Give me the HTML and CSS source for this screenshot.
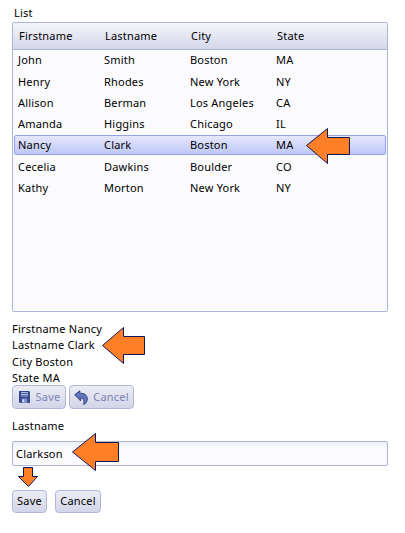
FILE: index.html
```
<!DOCTYPE html>
<html lang="en">
<head>
<meta charset="utf-8">
<title>List</title>
<link rel="stylesheet" href="styles.css">
</head>
<body>
<main class="page">
  <h1 class="title">List</h1>
  <section class="grid">
    <div class="row head"><span>Firstname</span><span>Lastname</span><span>City</span><span>State</span></div>
    <div class="rows">
      <div class="row"><span>John</span><span>Smith</span><span>Boston</span><span>MA</span></div>
      <div class="row"><span>Henry</span><span>Rhodes</span><span>New York</span><span>NY</span></div>
      <div class="row"><span>Allison</span><span>Berman</span><span>Los Angeles</span><span>CA</span></div>
      <div class="row"><span>Amanda</span><span>Higgins</span><span>Chicago</span><span>IL</span></div>
      <div class="row selected"><span>Nancy</span><span>Clark</span><span>Boston</span><span>MA</span></div>
      <div class="row"><span>Cecelia</span><span>Dawkins</span><span>Boulder</span><span>CO</span></div>
      <div class="row"><span>Kathy</span><span>Morton</span><span>New York</span><span>NY</span></div>
    </div>
  </section>
  <section class="details">
    <p>Firstname Nancy</p>
    <p>Lastname Clark</p>
    <p>City Boston</p>
    <p>State MA</p>
  </section>
  <div class="toolbar">
    <button class="btn disabled save-icon"><svg width="11" height="12" viewBox="0 0 12 12" preserveAspectRatio="none"><path fill="#36488f" d="M1 0h10l1 1v11H1l-1-1V0z"/><path fill="#b4bde2" d="M2.5 1h7v4.5h-7z"/><path fill="#4a5ba3" d="M3 2h6v1H3zM3 4h6v.7H3z"/><path fill="#8290c8" d="M3 7.5h6V12H3z"/><path fill="#e0e4f5" d="M4 8.3h1.6V11H4z"/></svg><span>Save</span></button>
    <button class="btn disabled cancel-icon"><svg width="14" height="15" viewBox="0 0 14 15"><path fill="#6274bd" stroke="#34437f" d="M.7 4.8 5.8.8v2.5c4.3-.3 7.5 1.7 7.5 5.6 0 2.6-1.3 4.7-3.7 5.6 1.2-3.6.2-6.1-3.4-6.4l.4 2.8z"/></svg><span>Cancel</span></button>
  </div>
  <label class="label" for="lastname">Lastname</label>
  <input class="field" id="lastname" value="Clarkson">
  <div class="actions"><button class="btn save">Save</button><button class="btn cancel">Cancel</button></div>
  <svg class="arrows" width="405" height="533" viewBox="0 0 405 533">
    <path d="M306.5 145.5 327.5 128.5v9h22v17h-22v9z"/>
    <path d="M102.5 345.5 123.5 327.5v9h21v18h-21v9z"/>
    <path d="M72.5 452 95.5 433.5v9h23v19h-23v9z"/>
    <path d="M23.5 467.5h9v9h5l-9 10-10-10h5z"/>
  </svg>
</main>
</body>
</html>
```
FILE: styles.css
```
* { box-sizing: border-box; }
body { margin: 0; background: #fff; }
.page {
  position: relative;
  width: 405px;
  height: 533px;
  padding: 5px 17px 0 12px;
  overflow: hidden;
  font: 11px/16px "Noto Sans", "Open Sans", sans-serif;
  letter-spacing: .2px;
  color: #000;
}
.title { margin: 0 0 1px 2px; font-size: 11px; font-weight: 400; line-height: 16px; }
.grid {
  height: 290px;
  border: 1px solid #aeb5d6;
  border-radius: 2px;
  background: #fbfbfd;
}
.row {
  display: grid;
  grid-template-columns: 86px 86px 86px 1fr;
  align-items: center;
  height: 21px;
  padding-left: 3px;
  border: 1px solid transparent;
}
.head {
  height: 27px;
  padding-left: 6px;
  border-width: 0 0 1px;
  border-bottom-color: #aeb5d6;
  background: linear-gradient(#f4f4fa, #d5d8ea);
}
.rows { display: grid; margin-top: -1px; padding: 0 1px; }
.rows .row:first-child { margin-bottom: 1px; }
.selected {
  height: 20px;
  margin: 1px 0;
  border-color: #94a3e8;
  border-radius: 2px;
  background: linear-gradient(#e5e8fc, #bec7f6);
}
.details { margin-top: 9px; letter-spacing: .22px; }
.details p { margin: 0; line-height: 16px; }
.details p:nth-child(3) { margin-top: 1px; }
.toolbar { display: flex; gap: 3px; margin-top: -1px; }
.btn {
  display: flex;
  align-items: center;
  justify-content: center;
  height: 23px;
  padding: 0 0 1px;
  border: 1px solid #b0b7d8;
  border-radius: 4px;
  background: linear-gradient(#ededf5, #d2d5e8);
  font: inherit;
  letter-spacing: .2px;
  color: #000;
}
.disabled { height: 24px; gap: 6px; padding: 0 0 0 1px; color: #7d83b4; }
.cancel-icon { gap: 5px; padding: 0; }
.save-icon { width: 54px; }
.cancel-icon { width: 65px; }
.label { display: block; margin-top: 9px; }
.field {
  display: block;
  width: 376px;
  height: 25px;
  margin-top: 7px;
  padding: 0 3px 1px;
  border: 1px solid #aeb5d6;
  border-radius: 2px;
  background: linear-gradient(#eeeff4, #fbfbfd 6px);
  font: inherit;
  letter-spacing: .2px;
  color: #000;
}
.actions { display: flex; gap: 8px; margin-top: 24px; }
.save { width: 35px; }
.cancel { width: 46px; }
.arrows { position: absolute; top: 0; left: 0; pointer-events: none; }
.arrows path { fill: #ff7f27; stroke: #10165c; stroke-width: 1; }
```
